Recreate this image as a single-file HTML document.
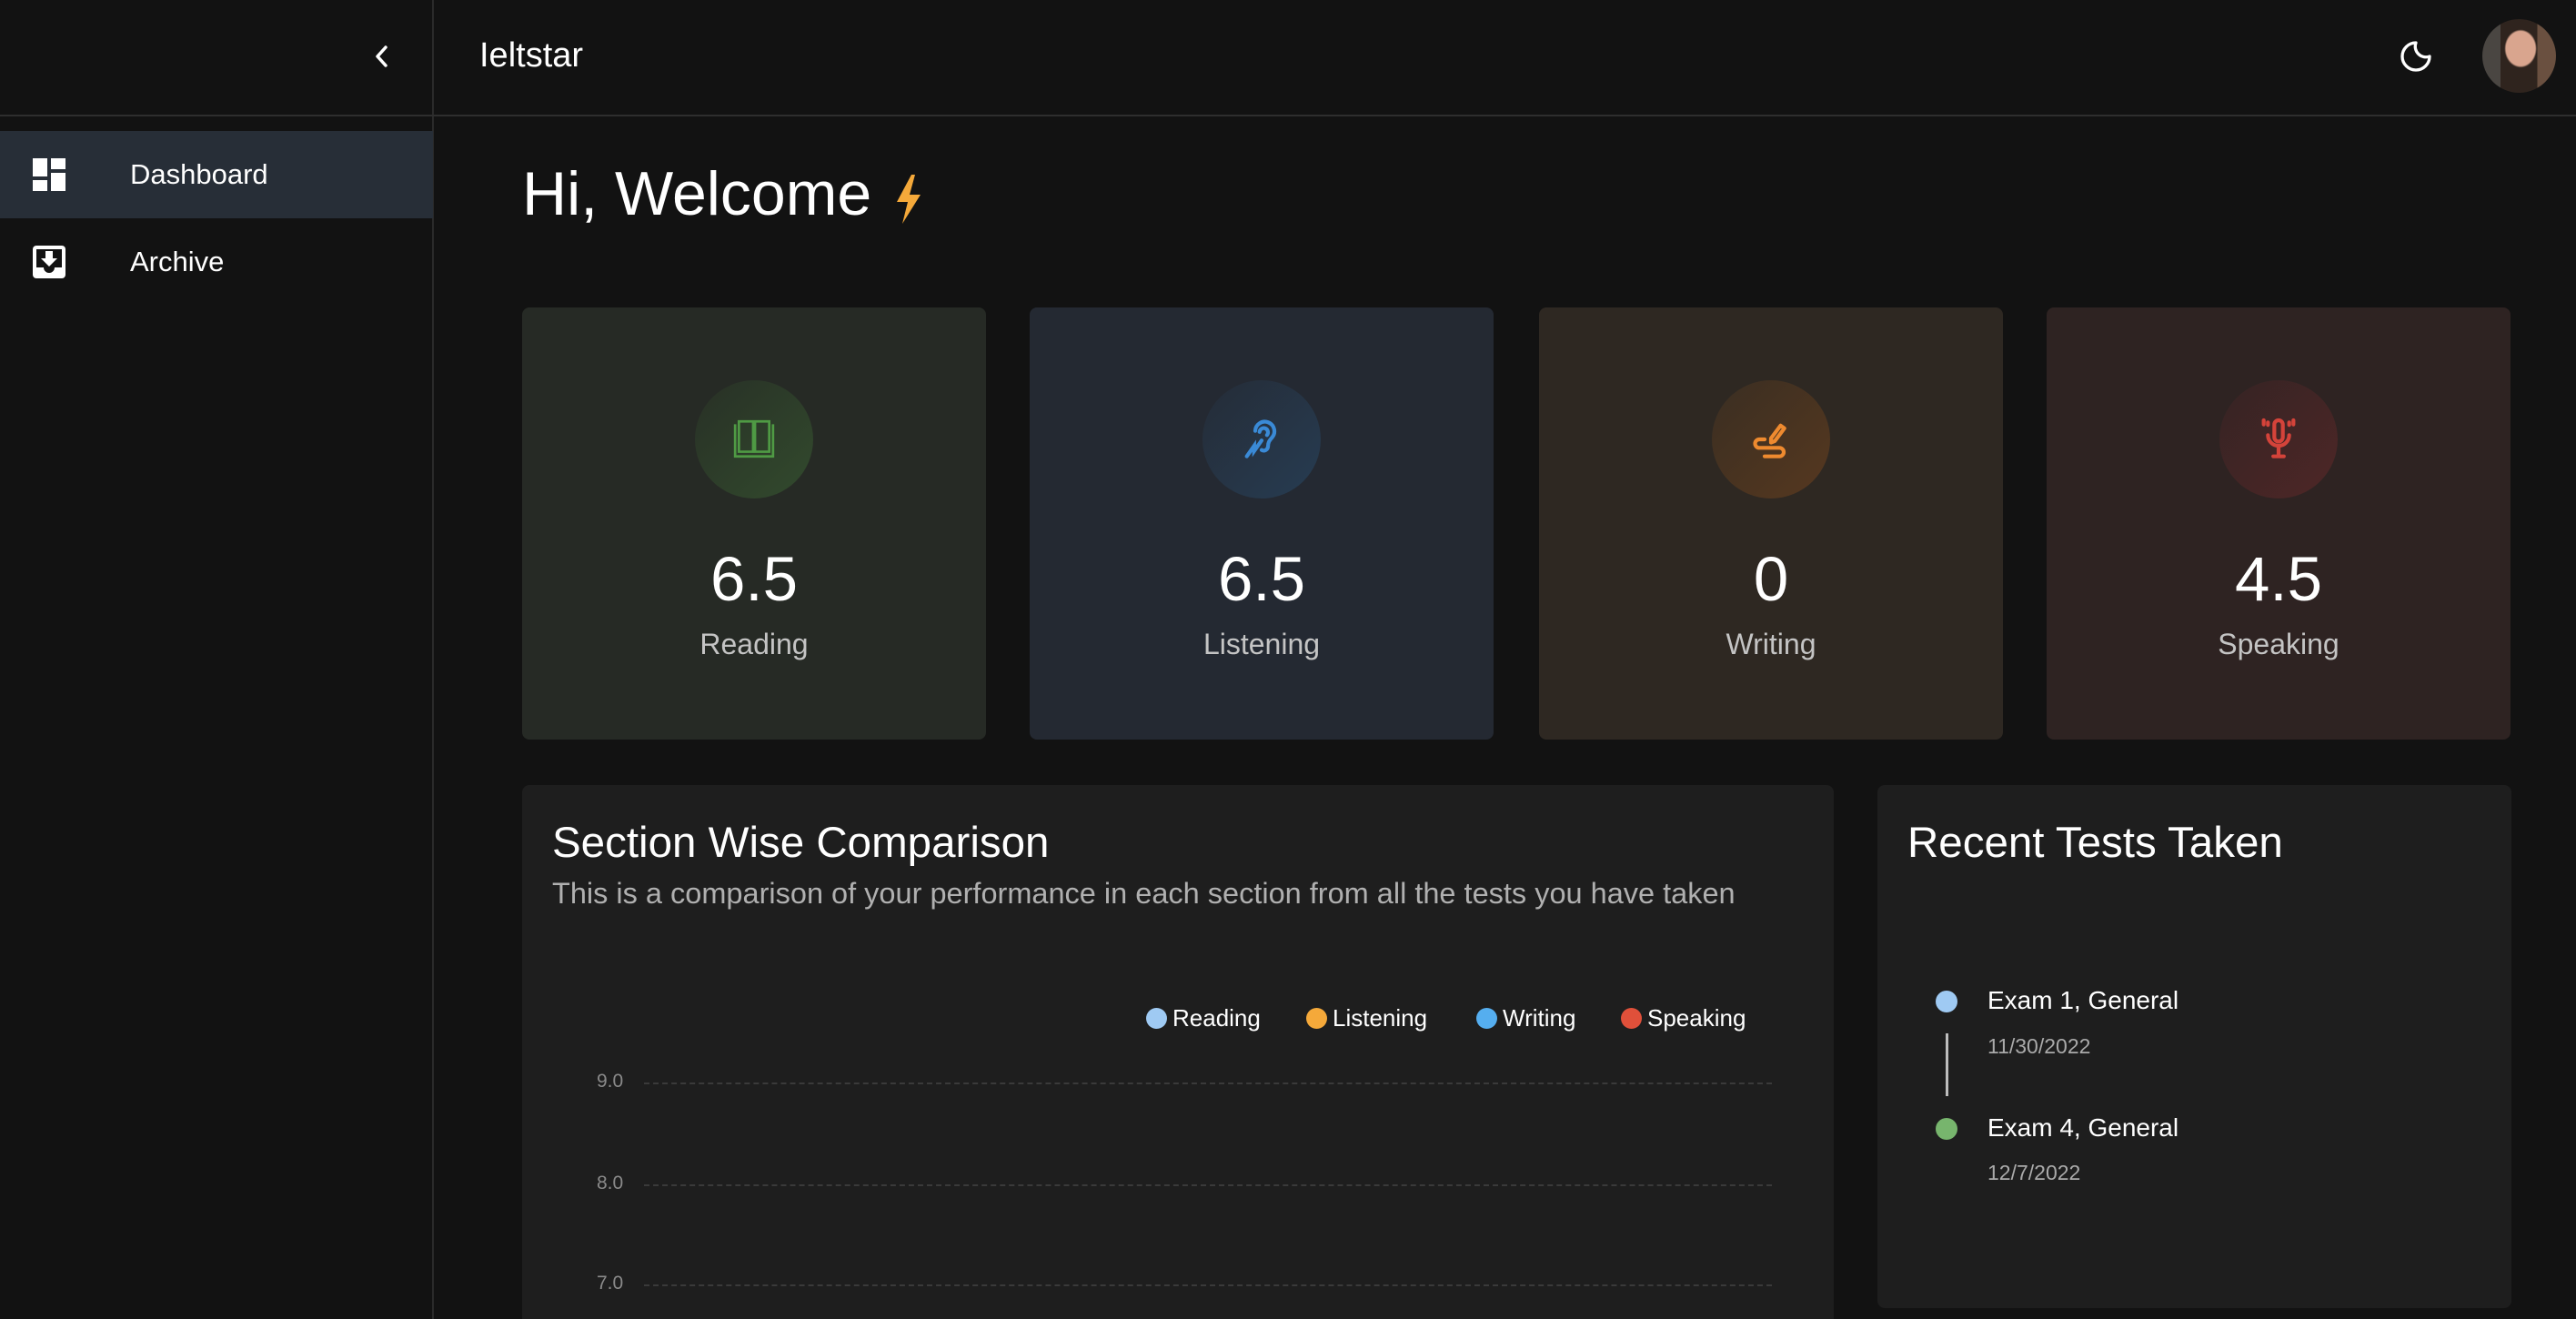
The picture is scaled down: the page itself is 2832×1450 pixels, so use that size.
<!DOCTYPE html>
<html style="overflow:hidden;height:1450px"><head><meta charset="utf-8"><style>
*{box-sizing:border-box;margin:0;padding:0}
html,body{overflow:hidden}
body{width:2832px;height:1450px;background:#121212;font-family:"Liberation Sans",sans-serif;color:#fff;position:relative;overflow:hidden}
.abs{position:absolute}
.side{left:0;top:0;width:477px;height:1450px;border-right:2px solid #2a2a2a}
.hdr{left:0;top:126px;width:2832px;height:2px;background:#2e2e2e}
.nav{left:0;width:476px;height:96px;display:flex;align-items:center}
.nav span{position:absolute;left:143px;font-size:31px}
.card{top:338px;width:510px;height:475px;border-radius:8px;text-align:center}
.circ{position:absolute;left:50%;top:80px;width:130px;height:130px;margin-left:-65px;border-radius:50%;display:flex;align-items:center;justify-content:center}
.card .num{position:absolute;left:0;right:0;top:259px;font-size:69px}
.lab{position:absolute;left:0;right:0;top:352px;font-size:32px;color:#c4c4c4}
.panel{background:#1e1e1e;border-radius:8px}
.leg{position:absolute;top:1104px;font-size:26px;display:flex;align-items:center}
.leg i{display:inline-block;width:23px;height:23px;border-radius:50%;margin-right:6px}
.gl{position:absolute;left:708px;width:1240px;border-top:2px dashed #3a3a3a}
.yl{position:absolute;left:656px;font-size:21px;color:#8a8a8a}
</style></head><body>
<div class="abs side"></div>
<div class="abs hdr"></div>
<svg class="abs" style="left:408px;top:48px" width="24" height="28" viewBox="0 0 24 28"><path d="M16 4 L7 14 L16 24" stroke="#fff" stroke-width="3.5" fill="none" stroke-linecap="round" stroke-linejoin="round"/></svg>
<div class="abs" style="left:527px;top:40px;font-size:38px">Ieltstar</div>
<svg class="abs" style="left:2636px;top:42px" width="40" height="40" viewBox="0 0 24 24"><path d="M12 3a7 7 0 0 0 9 9 9 9 0 1 1-9-9z" stroke="#fff" stroke-width="2" fill="none" stroke-linejoin="round"/></svg>
<div class="abs" style="left:2729px;top:21px;width:81px;height:81px;border-radius:50%;background:radial-gradient(ellipse 22% 26% at 52% 40%,#d9a58e 0 90%,transparent 100%),linear-gradient(90deg,#4a4642 0 25%,#2f241e 25% 75%,#6a5040 75%)"></div>

<div class="abs nav" style="top:144px;background:#272e37"><svg style="position:absolute;left:36px;top:30px" width="36" height="36" viewBox="0 0 36 36" fill="#fff"><rect x="0" y="0" width="16" height="20"/><rect x="20" y="0" width="16" height="12"/><rect x="0" y="24" width="16" height="12"/><rect x="20" y="16" width="16" height="20"/></svg><span>Dashboard</span></div>
<div class="abs nav" style="top:240px"><svg style="position:absolute;left:36px;top:30px" width="36" height="36" viewBox="0 0 36 36"><rect x="0" y="0" width="36" height="36" rx="4" fill="#fff"/><path d="M4 4h28v20h-8a6 6 0 0 1-12 0H4z" fill="#121212"/><path d="M14 6h8v8h5l-9 9-9-9h5z" fill="#fff"/></svg><span>Archive</span></div>

<div class="abs" style="left:574px;top:174px;font-size:68px">Hi, Welcome</div>
<svg class="abs" style="left:980px;top:190px" width="38" height="58" viewBox="0 0 38 58"><path d="M22 2 L6 32 H18 L12 56 L32 24 H20 L26 2z" fill="#f5a93a"/></svg>

<div class="abs card" style="left:574px;background:#262a25"><div class="circ" style="background:linear-gradient(135deg,#283026,#324a2d)"><svg width="50" height="50" viewBox="0 0 24 24" fill="none" stroke="#4f9a44" stroke-width="1.3"><path d="M2 4v17h20V4"/><path d="M4 2.5h7.5v16H4zM12.5 2.5H20v16h-7.5z"/><path d="M12 3v16"/></svg></div><div class="num">6.5</div><div class="lab">Reading</div></div>
<div class="abs card" style="left:1132px;background:#242932"><div class="circ" style="background:linear-gradient(135deg,#252c37,#263c52)"><svg width="56" height="56" viewBox="0 0 24 24" fill="none" stroke="#3a8ad6" stroke-width="1.8" stroke-linecap="round"><path d="M9 8a4.5 4.5 0 1 1 8 3c-1 1.3-2 2-2 4.5a2 2 0 0 1-3 1.5"/><path d="M11 8.5a2 2 0 1 1 3.5 1.5"/><path d="M5 20l3.5-5 0 2.5 3.5-5"/></svg></div><div class="num">6.5</div><div class="lab">Listening</div></div>
<div class="abs card" style="left:1692px;background:#2e2822"><div class="circ" style="background:linear-gradient(135deg,#3a2e22,#56381f)"><svg width="56" height="56" viewBox="0 0 24 24" fill="none" stroke="#ee8a2f" stroke-width="1.8" stroke-linecap="round" stroke-linejoin="round"><path d="M12 11.5l4.5-6 1.8 1.3-4.5 6-1.8.7z"/><path d="M9 12H6.5a2 2 0 0 0 0 4H16a2 2 0 0 1 0 4H9"/></svg></div><div class="num">0</div><div class="lab">Writing</div></div>
<div class="abs card" style="left:2250px;background:#2e2322"><div class="circ" style="background:linear-gradient(135deg,#352424,#4e2626)"><svg width="56" height="56" viewBox="0 0 24 24" fill="none" stroke="#d4433a" stroke-width="1.8" stroke-linecap="round"><rect x="10" y="3" width="4" height="10" rx="2"/><path d="M7 10a5 5 0 0 0 10 0M12 15v5M9.5 20h5M5 3v2M7 4v1.2M19 3v2M17 4v1.2"/></svg></div><div class="num">4.5</div><div class="lab">Speaking</div></div>

<div class="abs panel" style="left:574px;top:863px;width:1442px;height:600px"></div>
<div class="abs" style="left:607px;top:899px;font-size:47.5px">Section Wise Comparison</div>
<div class="abs" style="left:607px;top:964px;font-size:32.5px;color:#b0b0b0">This is a comparison of your performance in each section from all the tests you have taken</div>
<div class="leg" style="left:1260px"><i style="background:#9fcaf3"></i>Reading</div>
<div class="leg" style="left:1436px"><i style="background:#f5a93a"></i>Listening</div>
<div class="leg" style="left:1623px"><i style="background:#55aeef"></i>Writing</div>
<div class="leg" style="left:1782px"><i style="background:#e0503a"></i>Speaking</div>
<div class="yl" style="top:1177px">9.0</div><div class="gl" style="top:1190px"></div>
<div class="yl" style="top:1289px">8.0</div><div class="gl" style="top:1302px"></div>
<div class="yl" style="top:1399px">7.0</div><div class="gl" style="top:1412px"></div>

<div class="abs panel" style="left:2064px;top:863px;width:697px;height:575px"></div>
<div class="abs" style="left:2097px;top:899px;font-size:47.5px">Recent Tests Taken</div>
<div class="abs" style="left:2128px;top:1089px;width:24px;height:24px;border-radius:50%;background:#9fcaf3"></div>
<div class="abs" style="left:2139px;top:1136px;width:3px;height:69px;background:#bdbdbd"></div>
<div class="abs" style="left:2128px;top:1229px;width:24px;height:24px;border-radius:50%;background:#77b56d"></div>
<div class="abs" style="left:2185px;top:1084px;font-size:28px">Exam 1, General</div>
<div class="abs" style="left:2185px;top:1137px;font-size:23px;color:#aaa">11/30/2022</div>
<div class="abs" style="left:2185px;top:1224px;font-size:28px">Exam 4, General</div>
<div class="abs" style="left:2185px;top:1276px;font-size:23px;color:#aaa">12/7/2022</div>
</body></html>
